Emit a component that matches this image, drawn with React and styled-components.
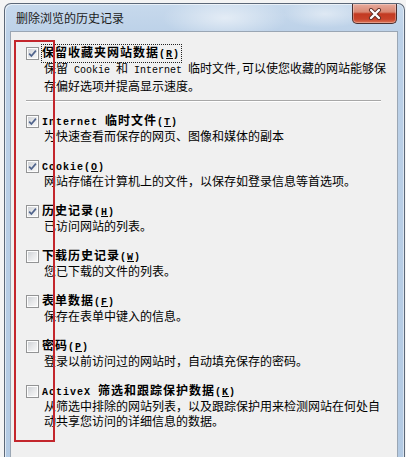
import React from "react";
import styled, { createGlobalStyle } from "styled-components";

const GlobalStyle = createGlobalStyle`
  html, body { margin: 0; padding: 0; background: #ffffff; }
  body { font-family: "Noto Sans CJK SC", "Liberation Sans", sans-serif; }
`;

const Page = styled.div`
  position: relative;
  width: 406px;
  height: 457px;
  overflow: hidden;
  background: #f4f4f4;
`;

const Window = styled.div`
  margin: 3px 0 0 4px;
  width: 401px;
  height: 470px;
  box-sizing: border-box;
  border: 1px solid #5c6878;
  border-bottom: none;
  border-radius: 7px 7px 0 0;
  padding: 0 6px 0 5px;
  display: flex;
  flex-direction: column;
  background:
    radial-gradient(ellipse 90px 30px at 220px 14px, rgba(255,255,255,0.55), rgba(255,255,255,0) 70%),
    radial-gradient(ellipse 60px 20px at 320px 10px, rgba(255,255,255,0.45), rgba(255,255,255,0) 70%),
    linear-gradient(180deg, #c7d9ec 0%, #bcd1e8 30px, #b3cae3 100%);
  box-shadow: inset 1px 1px 0 rgba(255,255,255,0.6), inset -1px 0 0 rgba(255,255,255,0.5);
`;

const TitleBar = styled.div`
  height: 27px;
  display: flex;
  justify-content: space-between;
  align-items: flex-start;
  padding-left: 6px;
  padding-right: 1px;
`;

const Title = styled.span`
  align-self: center;
  font-size: 12px;
  line-height: 14px;
  color: #1b1b1b;
  margin-top: 1px;
`;

const CloseButton = styled.div`
  width: 45px;
  height: 20px;
  box-sizing: border-box;
  border: 1px solid #4a2f2f;
  border-top: none;
  border-radius: 0 0 5px 5px;
  background: linear-gradient(180deg, #e7aa9c 0%, #d98873 42%, #c23a22 52%, #c8432a 80%, #db7457 100%);
  box-shadow: inset 0 0 0 1px rgba(255,255,255,0.3);
  display: flex;
  align-items: center;
  justify-content: center;
`;

const Panel = styled.div`
  flex: 1;
  background: #f0f0f0;
  border: 1px solid #9aa6b4;
  border-bottom: none;
  padding: 14px 16px 0 15px;
`;

const Item = styled.div`
  margin-bottom: ${(p) => (p.$last ? 0 : 16)}px;
`;

const LabelRow = styled.div`
  display: flex;
  align-items: center;
  height: 14px;
  gap: 3px;
`;

const Box = styled.span`
  flex: none;
  width: 13px;
  height: 13px;
  box-sizing: border-box;
  border: 1px solid #939495;
  background: #fdfdfd;
  padding: 1px;
  display: flex;
`;

const BoxInner = styled.span`
  flex: 1;
  display: flex;
  align-items: center;
  justify-content: center;
  background: linear-gradient(135deg, #cfd2d6 0%, #e6e7e9 50%, #f7f7f7 100%);
`;

const LabelText = styled.span`
  font-weight: 700;
  font-size: 12px;
  line-height: 14px;
  letter-spacing: 1px;
  color: #000;
  white-space: nowrap;
  padding: 0 1px 0 0;
  outline: ${(p) => (p.$focus ? "1px dotted #222" : "none")};
  outline-offset: 0;
`;

const Lat = styled.span`
  font-family: "Liberation Mono", "DejaVu Sans Mono", monospace;
  font-size: 10px;
`;

const Key = styled.span`
  text-decoration: underline;
`;

const Desc = styled.p`
  margin: 0 0 0 18px;
  font-size: 12px;
  line-height: 15px;
  color: #000;
  white-space: nowrap;
`;

const Separator = styled.div`
  margin: 7px 0 12px 0;
  height: 0;
  border-top: 1px solid #a8a8a8;
  border-bottom: 1px solid #ffffff;
`;

const Annotation = styled.div`
  position: absolute;
  left: 14px;
  top: 40px;
  width: 41px;
  height: 402px;
  box-sizing: border-box;
  border: 2px solid #c3262c;
  pointer-events: none;
`;

function Check({ checked }) {
  return (
    <Box>
      <BoxInner>
        {checked && (
          <svg width="9" height="9" viewBox="0 0 9 9">
            <path d="M1.2 4.6 L3.4 7 L7.9 1.6" fill="none" stroke="#50648c" strokeWidth="1.7" />
          </svg>
        )}
      </BoxInner>
    </Box>
  );
}

const items = [
  {
    checked: true,
    focus: true,
    label: <>保留收藏夹网站数据<Lat>(<Key>R</Key>)</Lat></>,
    desc: (
      <>
        保留<Lat> Cookie </Lat>和<Lat> Internet </Lat>临时文件<Lat>,</Lat>可以使您收藏的网站能够保
        <br />
        存偏好选项并提高显示速度。
      </>
    ),
  },
  {
    checked: true,
    label: <><Lat>Internet </Lat>临时文件<Lat>(<Key>T</Key>)</Lat></>,
    desc: <>为快速查看而保存的网页、图像和媒体的副本</>,
  },
  {
    checked: true,
    label: <><Lat>Cookie(<Key>O</Key>)</Lat></>,
    desc: <>网站存储在计算机上的文件，以保存如登录信息等首选项。</>,
  },
  {
    checked: true,
    label: <>历史记录<Lat>(<Key>H</Key>)</Lat></>,
    desc: <>已访问网站的列表。</>,
  },
  {
    checked: false,
    label: <>下载历史记录<Lat>(<Key>W</Key>)</Lat></>,
    desc: <>您已下载的文件的列表。</>,
  },
  {
    checked: false,
    label: <>表单数据<Lat>(<Key>F</Key>)</Lat></>,
    desc: <>保存在表单中键入的信息。</>,
  },
  {
    checked: false,
    label: <>密码<Lat>(<Key>P</Key>)</Lat></>,
    desc: <>登录以前访问过的网站时，自动填充保存的密码。</>,
  },
  {
    checked: false,
    label: <><Lat>ActiveX </Lat>筛选和跟踪保护数据<Lat>(<Key>K</Key>)</Lat></>,
    desc: (
      <>
        从筛选中排除的网站列表，以及跟踪保护用来检测网站在何处自
        <br />
        动共享您访问的详细信息的数据。
      </>
    ),
  },
];

function Entry({ item, last }) {
  return (
    <Item $last={last}>
      <LabelRow>
        <Check checked={item.checked} />
        <LabelText $focus={item.focus}>{item.label}</LabelText>
      </LabelRow>
      <Desc>{item.desc}</Desc>
    </Item>
  );
}

export default function App() {
  const [first, ...rest] = items;
  return (
    <>
      <GlobalStyle />
      <Page>
        <Window>
          <TitleBar>
            <Title>删除浏览的历史记录</Title>
            <CloseButton>
              <svg width="14" height="12" viewBox="0 0 14 12">
                <path d="M3 2 L11 10 M11 2 L3 10" stroke="#5a2a22" strokeWidth="4" strokeLinecap="round" />
                <path d="M3 2 L11 10 M11 2 L3 10" stroke="#ffffff" strokeWidth="2.4" strokeLinecap="round" />
              </svg>
            </CloseButton>
          </TitleBar>
          <Panel>
            <Entry item={first} last />
            <Separator />
            {rest.map((it, i) => (
              <Entry key={i} item={it} last={i === rest.length - 1} />
            ))}
          </Panel>
        </Window>
        <Annotation />
      </Page>
    </>
  );
}
